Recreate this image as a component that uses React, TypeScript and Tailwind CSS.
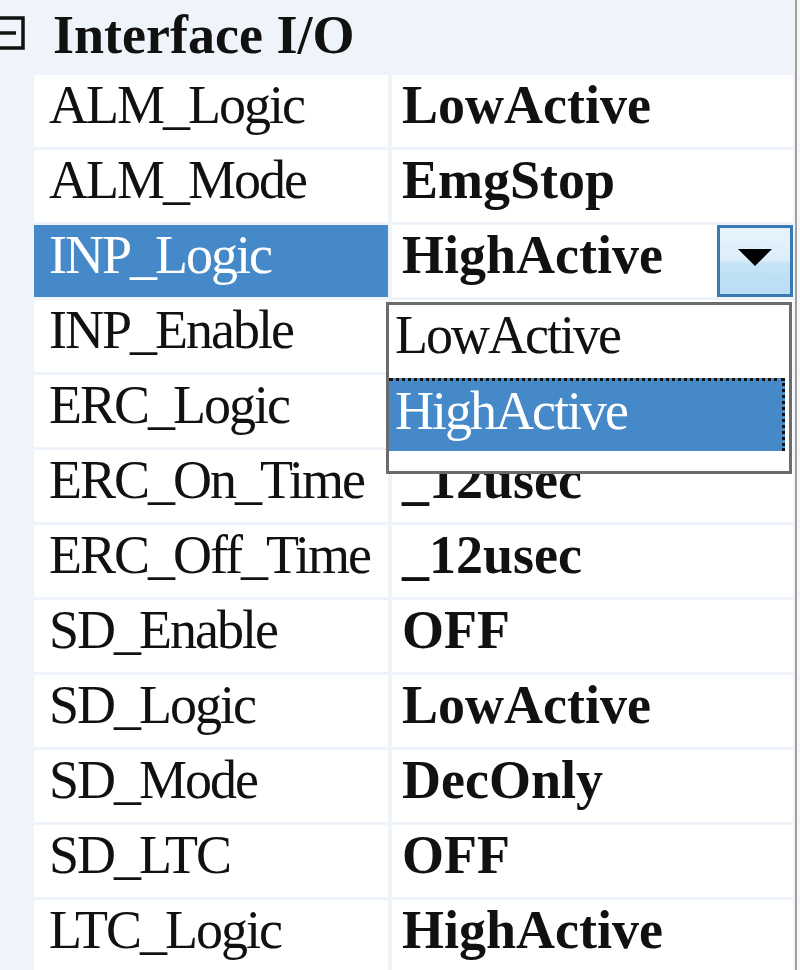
import React from "react";

type Row = { name: string; value: string; selected?: boolean; combo?: boolean };

// Values of the two rows under the open list are covered by it, so they stay empty.
const rows: Row[] = [
  { name: "ALM_Logic", value: "LowActive" },
  { name: "ALM_Mode", value: "EmgStop" },
  { name: "INP_Logic", value: "HighActive", selected: true, combo: true },
  { name: "INP_Enable", value: "" },
  { name: "ERC_Logic", value: "" },
  { name: "ERC_On_Time", value: "_12usec" },
  { name: "ERC_Off_Time", value: "_12usec" },
  { name: "SD_Enable", value: "OFF" },
  { name: "SD_Logic", value: "LowActive" },
  { name: "SD_Mode", value: "DecOnly" },
  { name: "SD_LTC", value: "OFF" },
  { name: "LTC_Logic", value: "HighActive" },
];

const font = "font-['Liberation_Serif','Times_New_Roman',serif]";

function CollapseGlyph() {
  return (
    <svg width="26" height="34" viewBox="0 0 26 34" className="shrink-0">
      <path d="M0 2H23V32H0" fill="none" stroke="#111" strokeWidth="3.5" />
      <path d="M0 17H16" stroke="#111" strokeWidth="3.5" />
    </svg>
  );
}

function ComboButton() {
  return (
    <div className="w-[76px] h-full shrink-0 border-[3px] border-[#3a7ab2] bg-[linear-gradient(#e6f3fc_0%,#dceefa_48%,#c4e3f5_55%,#b9ddf3_100%)] flex items-center justify-center">
      <svg width="36" height="20" viewBox="0 0 36 20" className="-mt-[8px]">
        <polygon points="1,2 35,2 18,19" fill="#000" />
      </svg>
    </div>
  );
}

export default function App() {
  return (
    <div className={`relative w-[800px] h-[970px] overflow-hidden bg-[#eff3fa] flex ${font}`}>
      <div className="w-[793px] shrink-0 flex flex-col">
        {/* category header */}
        <div className="h-[72px] shrink-0 flex items-start pt-[16px] gap-[27px]">
          <CollapseGlyph />
          <span className="text-[54px] leading-[60px] font-bold text-[#111] -mt-[11px]">Interface I/O</span>
        </div>

        {/* property rows */}
        {rows.map((r) => (
          <div key={r.name} className="h-[72px] mt-[3px] shrink-0 flex pl-[34px] gap-[4px]">
            <div
              className={`w-[354px] shrink-0 h-full pl-[15px] text-[54px] leading-[60px] tracking-[-2px] whitespace-nowrap overflow-hidden ${
                r.selected ? "bg-[#4689c8] text-white" : "bg-white text-[#111]"
              }`}
            >
              {r.name}
            </div>
            <div className="flex-1 h-full bg-white pl-[10px] flex justify-between items-start">
              <span className="text-[54px] leading-[60px] font-bold text-[#111] whitespace-nowrap">{r.value}</span>
              {r.combo && <ComboButton />}
            </div>
          </div>
        ))}
      </div>

      {/* right frame edge */}
      <div className="w-[2px] shrink-0" />
      <div className="w-[2px] shrink-0 bg-[#a0a0a0]" />
      <div className="flex-1 bg-[#f7f7f7]" />

      {/* open drop-down list */}
      <div className="absolute left-[386px] top-[302px] w-[406px] h-[172px] border-[3px] border-[#6b6b6b] bg-white flex flex-col">
        <div className="h-[73px] shrink-0 pl-[6px] text-[54px] leading-[60px] tracking-[-2px] text-[#111]">LowActive</div>
        <div className="h-[73px] shrink-0 mr-[4px] bg-[#4689c8] border-t-[3px] border-r-[3px] border-dotted border-[#111] pl-[6px] text-[54px] leading-[60px] tracking-[-2px] text-white">
          HighActive
        </div>
      </div>
    </div>
  );
}
